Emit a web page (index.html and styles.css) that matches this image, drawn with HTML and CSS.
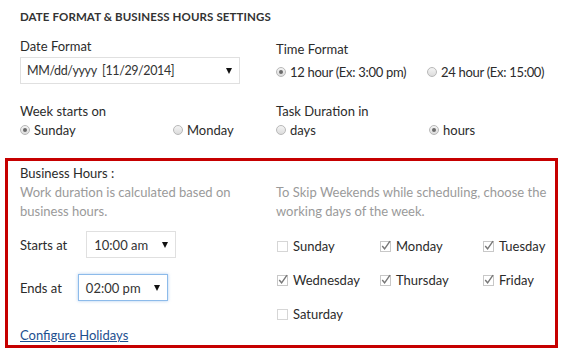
FILE: index.html
```html
<!DOCTYPE html>
<html lang="en">
<head>
    <meta charset="UTF-8">
    <meta name="viewport" content="width=device-width, initial-scale=1.0">
    <title>Date Format &amp; Business Hours Settings</title>
    <link rel="stylesheet" href="styles.css">
</head>
<body>
    <div class="settings">
        <div class="top">
            <h3 class="title">DATE FORMAT &amp; BUSINESS HOURS SETTINGS</h3>

            <div class="row first">
                <div class="field">
                    <div class="label">Date Format</div>
                    <div class="select date-select">
                        <span>MM/dd/yyyy&nbsp; [11/29/2014]</span>
                        <span class="arrow"></span>
                    </div>
                </div>
                <div class="field time-field">
                    <div class="label">Time Format</div>
                    <div class="options time-options">
                        <label class="radio checked"><span class="dot"></span>12 hour (Ex: 3:00 pm)</label>
                        <label class="radio"><span class="dot"></span>24 hour (Ex: 15:00)</label>
                    </div>
                </div>
            </div>

            <div class="row second">
                <div class="field">
                    <div class="label">Week starts on</div>
                    <div class="options">
                        <label class="radio checked"><span class="dot"></span>Sunday</label>
                        <label class="radio"><span class="dot"></span>Monday</label>
                    </div>
                </div>
                <div class="field">
                    <div class="label">Task Duration in</div>
                    <div class="options">
                        <label class="radio"><span class="dot"></span>days</label>
                        <label class="radio checked"><span class="dot"></span>hours</label>
                    </div>
                </div>
            </div>
        </div>

        <div class="business">
            <div class="col">
                <div class="line">Business Hours :</div>
                <div class="hint">Work duration is calculated based on business hours.</div>

                <div class="hours-row starts">
                    <span class="hours-label">Starts at</span>
                    <div class="select time-select">
                        <span>10:00 am</span>
                        <span class="arrow"></span>
                    </div>
                </div>
                <div class="hours-row ends">
                    <span class="hours-label">Ends at</span>
                    <div class="select time-select focused">
                        <span>02:00 pm</span>
                        <span class="arrow"></span>
                    </div>
                </div>

                <a class="holidays" href="#">Configure Holidays</a>
            </div>

            <div class="col days-col">
                <div class="hint">To Skip Weekends while scheduling, choose the working days of the week.</div>
                <div class="days">
                    <label class="check"><svg width="11" height="12" viewBox="0 0 11 12"><rect x="0.5" y="1.5" width="10" height="10" fill="#fff" stroke="#d6d6d6"/></svg>Sunday</label>
                    <label class="check"><svg width="11" height="12" viewBox="0 0 11 12"><rect x="0.5" y="1.5" width="10" height="10" fill="#fff" stroke="#c8c8c8"/><polyline points="2.2,6 4.6,8.8 10,1.2" fill="none" stroke="#777" stroke-width="1.4"/></svg>Monday</label>
                    <label class="check"><svg width="11" height="12" viewBox="0 0 11 12"><rect x="0.5" y="1.5" width="10" height="10" fill="#fff" stroke="#c8c8c8"/><polyline points="2.2,6 4.6,8.8 10,1.2" fill="none" stroke="#777" stroke-width="1.4"/></svg>Tuesday</label>
                    <label class="check"><svg width="11" height="12" viewBox="0 0 11 12"><rect x="0.5" y="1.5" width="10" height="10" fill="#fff" stroke="#c8c8c8"/><polyline points="2.2,6 4.6,8.8 10,1.2" fill="none" stroke="#777" stroke-width="1.4"/></svg>Wednesday</label>
                    <label class="check"><svg width="11" height="12" viewBox="0 0 11 12"><rect x="0.5" y="1.5" width="10" height="10" fill="#fff" stroke="#c8c8c8"/><polyline points="2.2,6 4.6,8.8 10,1.2" fill="none" stroke="#777" stroke-width="1.4"/></svg>Thursday</label>
                    <label class="check"><svg width="11" height="12" viewBox="0 0 11 12"><rect x="0.5" y="1.5" width="10" height="10" fill="#fff" stroke="#c8c8c8"/><polyline points="2.2,6 4.6,8.8 10,1.2" fill="none" stroke="#777" stroke-width="1.4"/></svg>Friday</label>
                    <label class="check"><svg width="11" height="12" viewBox="0 0 11 12"><rect x="0.5" y="1.5" width="10" height="10" fill="#fff" stroke="#d6d6d6"/></svg>Saturday</label>
                </div>
            </div>
        </div>
    </div>
</body>
</html>
```

FILE: styles.css
```css
body {
    font-family: Lato, "Open Sans", sans-serif;
    font-size: 13px;
    color: #2b2b2b;
    background-color: #fff;
    margin: 0;
    padding: 0;
}

.settings {
    width: 553px;
    padding-left: 5px;
}

.top {
    padding: 10px 0 0 15px;
}

.title {
    margin: 0 0 14px;
    font-size: 11.5px;
    line-height: 14px;
    font-weight: bold;
    color: #333;
    letter-spacing: 0.1px;
}

.row {
    display: grid;
    grid-template-columns: 256px 1fr;
}

.row.second {
    margin-top: 19px;
}

.label {
    line-height: 16px;
    margin-bottom: 3px;
}

.time-field {
    padding-top: 3px;
}

.time-field .label {
    margin-bottom: 7px;
}

.options {
    display: grid;
    grid-template-columns: 153px 1fr;
    line-height: 16px;
}

.time-options {
    grid-template-columns: 151px 1fr;
    letter-spacing: -0.3px;
}

.radio {
    display: flex;
    align-items: center;
    gap: 4px;
}

.radio .dot {
    width: 8px;
    height: 8px;
    border: 1px solid #b8b8b8;
    border-radius: 50%;
    background: linear-gradient(#f4f4f4, #dcdcdc);
    display: flex;
    align-items: center;
    justify-content: center;
}

.radio.checked .dot::after {
    content: "";
    width: 4px;
    height: 4px;
    border-radius: 50%;
    background-color: #6b6b6b;
}

.select {
    box-sizing: border-box;
    height: 27px;
    border: 1px solid #e0e0e0;
    background-color: #fff;
    display: flex;
    align-items: center;
    justify-content: space-between;
    padding: 0 7px 0 6px;
    color: #333;
}

.date-select {
    width: 220px;
    font-size: 12.5px;
    letter-spacing: -0.4px;
}

.arrow {
    width: 0;
    height: 0;
    border-left: 3px solid transparent;
    border-right: 3px solid transparent;
    border-top: 6px solid #111;
}

/* business hours box */
.business {
    margin-top: 20px;
    border: 3px solid #c60000;
    padding: 3px 0 0 12px;
    display: grid;
    grid-template-columns: 256px 1fr;
}

.line {
    line-height: 19px;
}

.hint {
    line-height: 19px;
    color: #9a9a9a;
}

.col .hint {
    width: 230px;
}

.days-col .hint {
    width: 280px;
    padding-top: 19px;
}

.hours-row {
    display: flex;
    align-items: center;
    gap: 19px;
}

.hours-row.starts {
    margin-top: 10px;
}

.hours-row.ends {
    margin-top: 16px;
    gap: 16px;
}

.time-select {
    width: 90px;
    padding-left: 7px;
}

.time-select.focused {
    border-color: #8dbbea;
    box-shadow: 0 0 3px rgba(120, 170, 230, 0.6);
}

.holidays {
    display: inline-block;
    margin-top: 25px;
    line-height: 19px;
    color: #1d4f8f;
}

.days {
    display: grid;
    grid-template-columns: 103px 103px 1fr;
    grid-auto-rows: 34px;
    margin-top: 8px;
}

.check {
    display: flex;
    align-items: center;
    gap: 5px;
    margin-left: 1px;
}
```
